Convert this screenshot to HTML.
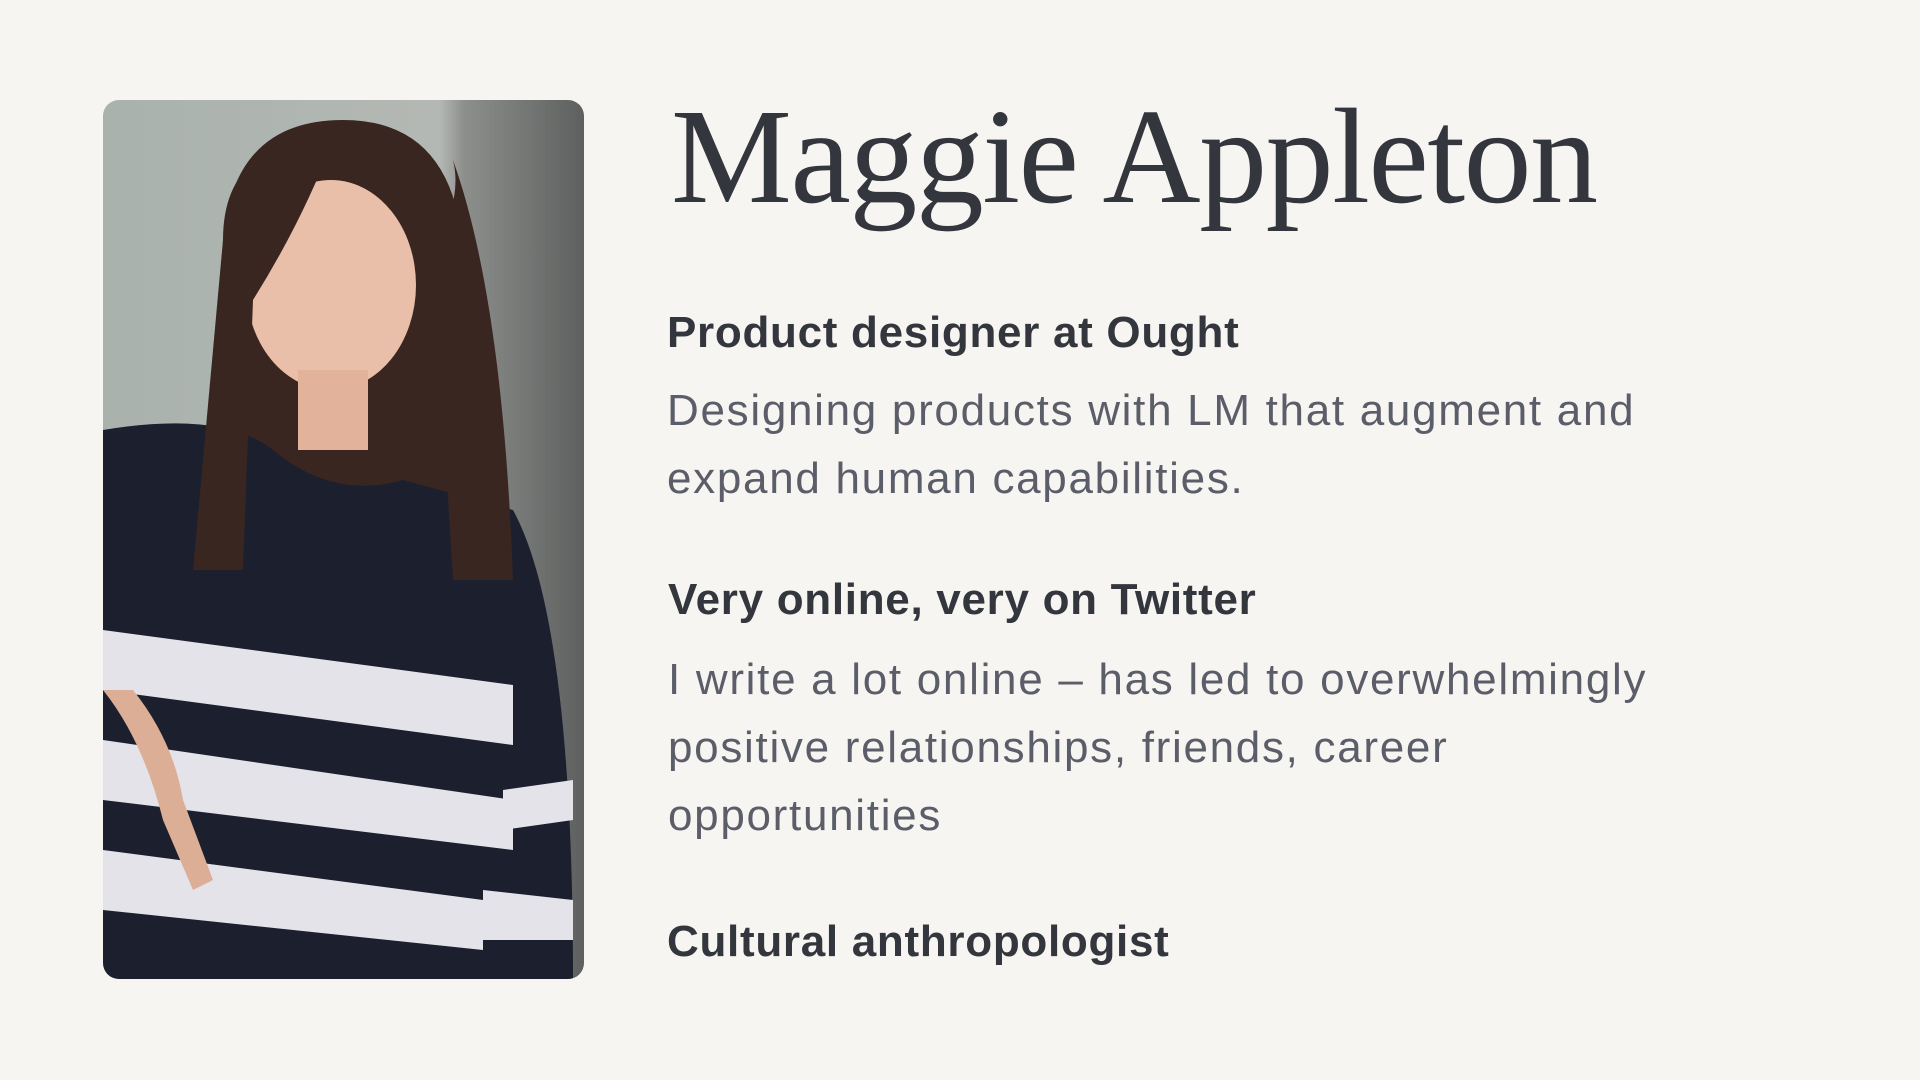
<!DOCTYPE html>
<html><head><meta charset="utf-8"><style>
body{margin:0;width:1920px;height:1080px;background:#f6f5f2;position:relative;overflow:hidden;font-family:"Liberation Sans",sans-serif}
.t{position:absolute;white-space:nowrap}
.h{font-weight:bold;font-size:44px;color:#33373d;letter-spacing:0.7px}
.b{font-size:44px;color:#5b5d68;letter-spacing:1.7px}
</style></head><body>
<svg style="position:absolute;left:103px;top:100px" width="481" height="879" viewBox="0 0 481 879">
<defs><clipPath id="c"><rect width="481" height="879" rx="16"/></clipPath>
<linearGradient id="bg" x1="0" x2="1"><stop offset="0" stop-color="#a9b2ad"/><stop offset=".7" stop-color="#b4b8b4"/><stop offset=".75" stop-color="#8d8f8d"/><stop offset="1" stop-color="#5e605f"/></linearGradient></defs>
<g clip-path="url(#c)">
<rect width="481" height="879" fill="url(#bg)"/>
<path d="M120 140 Q130 20 240 20 Q350 20 360 150 L400 480 L110 480 Z" fill="#3a2620"/>
<ellipse cx="228" cy="185" rx="85" ry="105" fill="#e9bfa9"/>
<rect x="195" y="270" width="70" height="80" fill="#e2b29b"/>
<path d="M0 330 Q120 310 170 350 Q230 400 300 380 L410 410 Q470 520 470 879 L0 879 Z" fill="#1c1f2e"/>
<path d="M120 140 Q120 40 230 40 Q200 120 150 200 L140 470 L90 470 Z" fill="#3a2620"/>
<path d="M330 150 Q360 100 350 60 Q400 200 410 480 L350 480 Z" fill="#3a2620"/>
<g fill="#e4e3ea"><path d="M0 530 L410 585 L410 645 L0 590 Z"/><path d="M0 640 L410 700 L410 750 L0 700 Z"/><path d="M0 750 L380 800 L380 850 L0 810 Z"/><path d="M400 690 L470 680 L470 720 L400 730 Z"/><path d="M380 790 L470 800 L470 840 L380 840 Z"/></g>
<path d="M0 590 Q40 640 60 720 L90 790 L110 780 L80 700 Q70 640 30 590 Z" fill="#dcae96"/>
</g></svg>
<div class="t" style="left:671px;top:77px;font-family:'Liberation Serif',serif;font-size:136px;color:#33373d;letter-spacing:-1.5px;line-height:160px">Maggie Appleton</div>
<div class="t h" style="left:667px;top:308px">Product designer at Ought</div>
<div class="t b" style="left:667px;top:386px">Designing products with LM that augment and</div>
<div class="t b" style="left:667px;top:454px">expand human capabilities.</div>
<div class="t h" style="left:668px;top:575px">Very online, very on Twitter</div>
<div class="t b" style="left:668px;top:655px">I write a lot online – has led to overwhelmingly</div>
<div class="t b" style="left:668px;top:723px">positive relationships, friends, career</div>
<div class="t b" style="left:668px;top:791px">opportunities</div>
<div class="t h" style="left:667px;top:917px">Cultural anthropologist</div>
</body></html>
